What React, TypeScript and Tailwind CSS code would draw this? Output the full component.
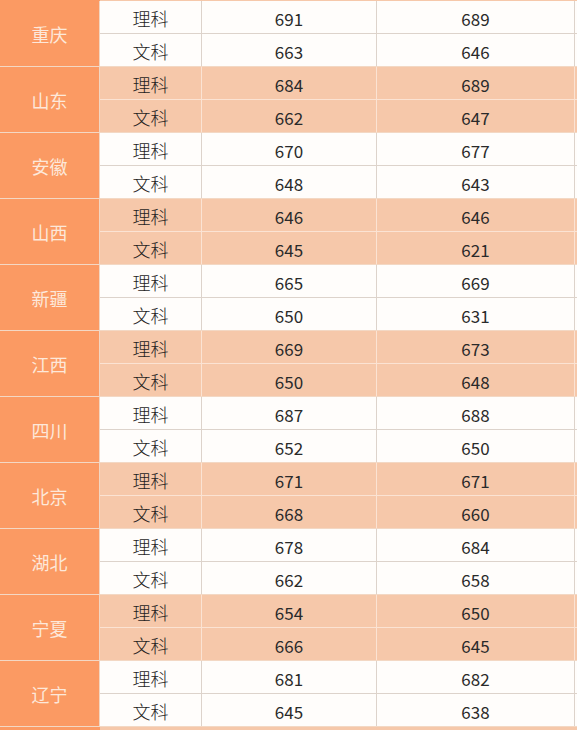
// 各省录取分数线表格：省份 / 科类 / 两列分数
const GROUPS: { name: string; rows: [string, string, string][] }[] = [
  { name: '重庆', rows: [['理科', '691', '689'], ['文科', '663', '646']] },
  { name: '山东', rows: [['理科', '684', '689'], ['文科', '662', '647']] },
  { name: '安徽', rows: [['理科', '670', '677'], ['文科', '648', '643']] },
  { name: '山西', rows: [['理科', '646', '646'], ['文科', '645', '621']] },
  { name: '新疆', rows: [['理科', '665', '669'], ['文科', '650', '631']] },
  { name: '江西', rows: [['理科', '669', '673'], ['文科', '650', '648']] },
  { name: '四川', rows: [['理科', '687', '688'], ['文科', '652', '650']] },
  { name: '北京', rows: [['理科', '671', '671'], ['文科', '668', '660']] },
  { name: '湖北', rows: [['理科', '678', '684'], ['文科', '662', '658']] },
  { name: '宁夏', rows: [['理科', '654', '650'], ['文科', '666', '645']] },
  { name: '辽宁', rows: [['理科', '681', '682'], ['文科', '645', '638']] },
];

const FONT = { fontFamily: '"Noto Sans CJK SC", "Noto Sans", sans-serif' };

function Strip({ h }: { h: string }) {
  return (
    <div className={`flex ${h}`}>
      <div className="w-[100px] bg-[#fb9a63]" />
      <div className="flex-1 bg-[#f6c8aa]" />
    </div>
  );
}

export default function App() {
  return (
    <div className="flex h-[730px] w-[577px] flex-col bg-[#fffdfb]" style={FONT}>
      <Strip h="h-[1px]" />
      {GROUPS.map((g, gi) => {
        const peach = gi % 2 === 1;
        const line = peach ? 'border-[#fbe3d3]' : 'border-[#ddd3cb]';
        return (
          <div key={g.name} className="flex h-[66px] border-b border-[#f3d8c4]">
            <div className="flex w-[100px] items-center justify-center border-r border-[#f1d6c2] bg-[#fb9a63] pt-[2px] text-[18px] font-normal text-[#fde8da]">
              {g.name}
            </div>
            <div className={`flex flex-1 flex-col ${peach ? 'bg-[#f6c8aa]' : 'bg-[#fffdfb]'}`}>
              {g.rows.map((r, ri) => (
                <div key={r[0]} className={`flex flex-1 ${ri === 0 ? `border-b ${line}` : ''}`}>
                  <div className={`flex w-[102px] items-center justify-center border-r ${line} pt-[3px] text-[18px] font-light text-[#1e1e1e]`}>
                    {r[0]}
                  </div>
                  <div className={`flex w-[175px] items-center justify-center border-r ${line} pt-[3px] text-[17px] font-normal text-[#2a2a2a]`}>
                    {r[1]}
                  </div>
                  <div className={`flex w-[198px] items-center justify-center border-r ${line} pt-[3px] text-[17px] font-normal text-[#2a2a2a]`}>
                    {r[2]}
                  </div>
                  <div className="flex-1" />
                </div>
              ))}
            </div>
          </div>
        );
      })}
      <Strip h="flex-1" />
    </div>
  );
}
